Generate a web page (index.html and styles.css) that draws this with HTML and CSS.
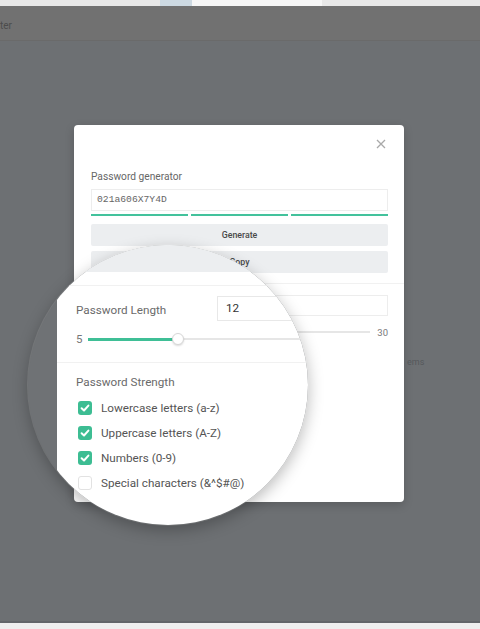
FILE: index.html
```html
<!DOCTYPE html>
<html lang="en">
<head>
    <meta charset="UTF-8">
    <meta name="viewport" content="width=device-width, initial-scale=1.0">
    <title>Password generator</title>
    <link rel="stylesheet" href="styles.css">
</head>
<body>
    <div class="tabbar">
        <span class="tab tab-active"></span>
        <span class="tab tab-open"></span>
    </div>
    <div class="toolbar">ter</div>

    <div class="backdrop">
        <span class="behind-text">ems</span>

        <div class="modal">
            <div class="modal-head">
                <svg class="close" width="10" height="10" viewBox="0 0 10 10">
                    <path d="M1 1 L9 9 M9 1 L1 9" stroke="#a9a9a9" stroke-width="1.3" fill="none"/>
                </svg>
            </div>

            <p class="label">Password generator</p>
            <div class="pw-input">021a606X7Y4D</div>
            <div class="bars">
                <span></span><span></span><span></span>
            </div>
            <button class="btn btn-first">Generate</button>
            <button class="btn">Copy</button>

            <div class="divider"></div>

            <div class="length-row">
                <div class="len-input"></div>
            </div>
            <div class="slider-row">
                <div class="track"><div class="track-fill"></div></div>
                <span class="max">30</span>
            </div>
        </div>
    </div>

    <div class="bottom-line"></div>
    <div class="bottom-strip"></div>

    <!-- magnifier over the options part of the modal -->
    <div class="lens">
        <div class="lens-page">
            <div class="lens-btn"></div>
            <div class="lens-divider"></div>

            <div class="lens-length">
                <span class="lens-label lens-label-col">Password Length</span>
                <div class="lens-input">12</div>
            </div>

            <div class="lens-slider">
                <span class="lens-min">5</span>
                <div class="lens-track">
                    <div class="lens-fill"></div>
                    <div class="lens-thumb"></div>
                </div>
            </div>

            <div class="lens-divider lens-divider-2"></div>

            <p class="lens-label lens-strength">Password Strength</p>

            <div class="check-row">
                <span class="box checked">
                    <svg width="14" height="14" viewBox="0 0 14 14"><path d="M3.6 7.3 L6 9.5 L10.4 4.6" stroke="#fff" stroke-width="2" fill="none" stroke-linecap="round" stroke-linejoin="round"/></svg>
                </span>
                <span class="check-text">Lowercase letters (a-z)</span>
            </div>
            <div class="check-row">
                <span class="box checked">
                    <svg width="14" height="14" viewBox="0 0 14 14"><path d="M3.6 7.3 L6 9.5 L10.4 4.6" stroke="#fff" stroke-width="2" fill="none" stroke-linecap="round" stroke-linejoin="round"/></svg>
                </span>
                <span class="check-text">Uppercase letters (A-Z)</span>
            </div>
            <div class="check-row">
                <span class="box checked">
                    <svg width="14" height="14" viewBox="0 0 14 14"><path d="M3.6 7.3 L6 9.5 L10.4 4.6" stroke="#fff" stroke-width="2" fill="none" stroke-linecap="round" stroke-linejoin="round"/></svg>
                </span>
                <span class="check-text">Numbers (0-9)</span>
            </div>
            <div class="check-row">
                <span class="box"></span>
                <span class="check-text">Special characters (&amp;^$#@)</span>
            </div>
        </div>
    </div>
</body>
</html>
```

FILE: styles.css
```css
* {
    padding: 0;
    margin: 0;
    box-sizing: border-box;
    font-family: Roboto, "Liberation Sans", sans-serif;
}
body {
    width: 480px;
    height: 629px;
    overflow: hidden;
    background: #6d7073;
}
.tabbar {
    height: 6px;
    display: flex;
    padding-left: 160px;
    background: #e8e8e8;
}
.tab-active {
    width: 32px;
    background: #cdd9e2;
}
.tab-open {
    width: 130px;
    background: #f6f6f6;
}
.toolbar {
    height: 35px;
    padding-top: 14px;
    font-size: 10px;
    line-height: 12px;
    color: #4c4c4c;
    background: #717171;
    border-bottom: 1px solid #6a6a6a;
}
.backdrop {
    height: 580px;
    padding-top: 84px;
    background: #6d7073;
}
.behind-text {
    position: absolute;
    left: 407px;
    top: 357px;
    font-size: 9px;
    color: #55585b;
}
.bottom-line {
    height: 2px;
    background: #63666a;
}
.bottom-strip {
    height: 6px;
    background: #efefef;
}

/* modal */
.modal {
    width: 330px;
    height: 377px;
    margin-left: 74px;
    padding: 12px 16px 0 17px;
    background: #fff;
    border-radius: 4px;
    box-shadow: 0px 3px 10px rgba(0, 0, 0, 0.18);
}
.modal-head {
    height: 14px;
    display: flex;
    align-items: center;
    justify-content: flex-end;
}
.close {
    margin-right: 2px;
}
.label {
    margin-top: 20px;
    font-size: 10.2px;
    line-height: 12px;
    color: #666;
}
.pw-input {
    margin-top: 6px;
    height: 22px;
    padding: 0 5px;
    border: 1px solid #ededed;
    font-family: "Liberation Mono", monospace;
    font-size: 9.7px;
    line-height: 20px;
    color: #666;
}
.bars {
    margin-top: 3px;
    height: 2px;
    display: grid;
    grid-template-columns: 1fr 1fr 1fr;
    gap: 3px;
}
.bars span {
    background: #43c29c;
}
.btn {
    display: block;
    width: 100%;
    height: 22px;
    margin-top: 5px;
    border: none;
    border-radius: 2px;
    background: #eceef0;
    font-size: 8.8px;
    font-weight: 500;
    color: #4a4a4a;
}
.btn-first {
    margin-top: 8px;
}
.divider {
    margin: 10px -16px 0 -17px;
    height: 1px;
    background: #f1f1f1;
}
.length-row {
    margin-top: 11px;
    display: flex;
    justify-content: flex-end;
}
.len-input {
    width: 174px;
    height: 21px;
    border: 1px solid #ededed;
}
.slider-row {
    margin-top: 6px;
    height: 20px;
    display: flex;
    align-items: center;
}
.track {
    flex: 1;
    height: 1.5px;
    background: #e6e6e6;
}
.track-fill {
    width: 75px;
    height: 100%;
    background: #43c29c;
}
.max {
    margin-left: 7px;
    font-size: 9.5px;
    color: #7a7a7a;
}

/* magnifier */
.lens {
    position: absolute;
    left: 28px;
    top: 245px;
    width: 280px;
    height: 280px;
    border-radius: 50%;
    overflow: hidden;
    background: #6f7275;
    box-shadow: 0 0 0 1px rgba(255, 255, 255, 0.12), 0px 5px 16px rgba(0, 0, 0, 0.28);
}
.lens-page {
    margin-left: 29px;
    width: 300px;
    height: 100%;
    padding-left: 19px;
    background: #fff;
}
.lens-btn {
    height: 27px;
    background: #eceef0;
}
.lens-divider {
    margin: 13px 0 0 -19px;
    height: 1px;
    background: #f1f1f1;
}
.lens-length {
    margin-top: 10px;
    display: flex;
    align-items: center;
}
.lens-label {
    font-size: 11.7px;
    line-height: 14px;
    color: #6a6a6a;
}
.lens-label-col {
    width: 141px;
    padding-top: 3px;
}
.lens-input {
    flex: 1;
    height: 25px;
    padding-left: 8px;
    border: 1px solid #e8e8e8;
    font-size: 11.7px;
    line-height: 23px;
    color: #333;
}
.lens-slider {
    margin-top: 11px;
    height: 14px;
    display: flex;
    align-items: center;
}
.lens-min {
    width: 12px;
    font-size: 11.5px;
    color: #777;
}
.lens-track {
    position: relative;
    flex: 1;
    height: 2px;
    background: #e6e6e6;
}
.lens-fill {
    width: 90px;
    height: 3px;
    margin-top: -0.5px;
    background: #3fbf96;
}
.lens-thumb {
    position: absolute;
    left: 84px;
    top: -5px;
    width: 12px;
    height: 12px;
    border-radius: 50%;
    background: #fff;
    border: 1px solid #d6d6d6;
    box-shadow: 0 1px 2px rgba(0, 0, 0, 0.15);
}
.lens-divider-2 {
    margin-top: 16px;
}
.lens-strength {
    margin-top: 12px;
}
.check-row {
    height: 25px;
    display: flex;
    align-items: center;
}
.lens-strength + .check-row {
    margin-top: 6px;
}
.box {
    width: 14px;
    height: 14px;
    margin-left: 2px;
    border-radius: 3px;
    border: 1px solid #e2e2e2;
    background: #fff;
}
.box.checked {
    border: none;
    background: #3dbd93;
}
.box svg {
    display: block;
}
.check-text {
    margin-left: 9px;
    font-size: 11.7px;
    color: #555;
}
```
